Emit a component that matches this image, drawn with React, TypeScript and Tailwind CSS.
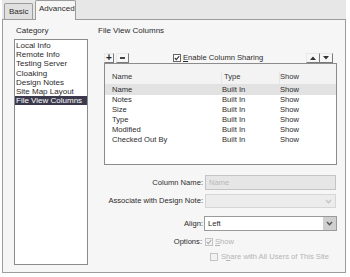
import React from "react";

function Check({ color = "#333" }: { color?: string }) {
  return (
    <svg width="6" height="6" viewBox="0 0 6 6">
      <polyline points="0.8,3 2.3,4.6 5.2,1.2" fill="none" stroke={color} strokeWidth="1.1" />
    </svg>
  );
}

function Chevron({ color }: { color: string }) {
  return (
    <svg width="7" height="5" viewBox="0 0 7 5">
      <polyline points="1,1 3.5,3.8 6,1" fill="none" stroke={color} strokeWidth="1.4" />
    </svg>
  );
}

const categories = [
  "Local Info",
  "Remote Info",
  "Testing Server",
  "Cloaking",
  "Design Notes",
  "Site Map Layout",
  "File View Columns",
];

const rows = ["Name", "Notes", "Size", "Type", "Modified", "Checked Out By"];

export default function App() {
  return (
    <div className="w-[350px] h-[277px] bg-white pl-[2px] pr-[4px] text-[7.6px] text-[#2c2c2c] font-['Liberation_Sans',Arial,sans-serif] overflow-hidden">
      {/* tab strip */}
      <div className="h-[19px] flex items-end bg-[#e7e7e7] relative z-10">
        <div className="ml-[2px] w-[29px] h-[16px] border border-b-0 border-[#9c9c9c] bg-[#e0e0e0] rounded-t-[2px] pl-[4px] pt-[3px] leading-[10px] text-[8px]">
          Basic
        </div>
        <div className="ml-[2px] w-[41px] h-[20px] -mb-px border border-b-0 border-[#9c9c9c] bg-[#f6f6f6] rounded-t-[2px] pl-[3px] pt-[3px] leading-[10px] text-[8px]">
          Advanced
        </div>
      </div>

      {/* panel */}
      <div className="h-[254px] border border-[#9c9c9c] bg-[#f6f6f6] flex">
        {/* left column */}
        <div className="ml-[11px] w-[74px] pt-[6px] flex flex-col">
          <div className="h-[10px] leading-[10px] pl-[2px] text-[8px]">Category</div>
          <div className="mt-[3px] h-[226px] border border-[#8c8c8c] bg-white pt-[1px] flex flex-col text-[8px]">
            {categories.map((c, i) => (
              <div
                key={c}
                className={
                  i === categories.length - 1
                    ? "leading-[9.2px] h-[9.2px] pl-[1px] bg-[#3a3a4c] text-white"
                    : "leading-[9.2px] h-[9.2px] pl-[1px]"
                }
              >
                {c}
              </div>
            ))}
          </div>
        </div>

        {/* right column */}
        <div className="ml-[10px] w-[239px] pt-[6px] flex flex-col">
          <div className="h-[10px] leading-[10px] text-[8px]">File View Columns</div>

          {/* toolbar row */}
          <div className="mt-[17px] ml-[6px] mr-[4px] h-[10px] flex items-center">
            <div className="w-[10px] h-[10px] border-r border-b border-[#7a7a7a] border-l border-t border-l-[#e8e8e8] border-t-[#e8e8e8] flex items-center justify-center font-bold text-[10px] leading-[10px] text-[#222]">
              +
            </div>
            <div className="ml-[2px] w-[13px] h-[10px] border-r border-b border-[#7a7a7a] border-l border-t border-l-[#e8e8e8] border-t-[#e8e8e8] flex items-center justify-center">
              <div className="w-[5px] h-[1.5px] bg-[#444]" />
            </div>
            <div className="ml-[44px] w-[8px] h-[8px] border border-[#666] bg-white flex items-center justify-center">
              <Check />
            </div>
            <div className="ml-[2px] leading-[10px]">
              <span className="underline">E</span>nable Column Sharing
            </div>
            <div className="ml-auto flex">
              <div className="w-[14px] h-[10px] border-r border-b border-[#7a7a7a] border-l border-t border-l-[#e8e8e8] border-t-[#e8e8e8] flex items-center justify-center">
                <svg width="6" height="4" viewBox="0 0 6 4">
                  <polygon points="0,4 3,0.5 6,4" fill="#333" />
                </svg>
              </div>
              <div className="w-[13px] h-[10px] border-r border-b border-[#7a7a7a] border-t border-t-[#e8e8e8] flex items-center justify-center">
                <svg width="6" height="4" viewBox="0 0 6 4">
                  <polygon points="0,0 6,0 3,3.5" fill="#333" />
                </svg>
              </div>
            </div>
          </div>

          {/* table */}
          <div className="ml-[6px] h-[102px] border border-[#8c8c8c] bg-white flex flex-col">
            <div className="h-[21px] pt-[8px] leading-[10px] bg-[#f3f3f3] border-b border-[#e2e2e2] grid grid-cols-[117px_58px_1fr] text-[#333]">
              <div className="pl-[7px] border-r border-[#e6e6e6]">Name</div>
              <div className="pl-[2px] border-r border-[#e6e6e6]">Type</div>
              <div className="pl-[0px]">Show</div>
            </div>
            {rows.map((r, i) => (
              <div
                key={r}
                className={
                  i === 0
                    ? "h-[10px] leading-[10px] grid grid-cols-[117px_58px_1fr] bg-[#e2e2e2]"
                    : "h-[10px] leading-[10px] grid grid-cols-[117px_58px_1fr]"
                }
              >
                <div className="pl-[7px]">{r}</div>
                <div>Built In</div>
                <div>Show</div>
              </div>
            ))}
          </div>

          {/* form */}
          <div className="mt-[10px] h-[15px] flex items-center">
            <div className="w-[105px] text-right leading-[10px]">Column Name:</div>
            <div className="ml-[2px] w-[131px] h-[15px] border border-[#c4c4c4] bg-[#e6e6e6] pl-[3px] leading-[13px] text-[#b9b9b9]">
              Name
            </div>
          </div>
          <div className="mt-[4px] h-[14px] flex items-center">
            <div className="w-[105px] text-right leading-[10px]">Associate with Design Note:</div>
            <div className="ml-[2px] w-[131px] h-[14px] border border-[#d6d6d6] bg-[#ececec] flex items-center justify-end pr-[3px]">
              <Chevron color="#c4c4c4" />
            </div>
          </div>
          <div className="mt-[8px] h-[15px] flex items-center">
            <div className="w-[105px] text-right leading-[10px]">Align:</div>
            <div className="ml-[1px] w-[133px] h-[15px] border border-[#9a9a9a] bg-white flex items-center">
              <div className="pl-[3px] leading-[10px] flex-1">Left</div>
              <div className="w-[13px] h-[13px] bg-[#cfcfcf] flex items-center justify-center">
                <Chevron color="#555" />
              </div>
            </div>
          </div>
          <div className="mt-[6px] h-[10px] flex items-center">
            <div className="w-[104px] text-right leading-[10px]">Options:</div>
            <div className="ml-[3px] w-[8px] h-[8px] border border-[#c4c4c4] bg-[#f2f2f2] flex items-center justify-center">
              <Check color="#b0b0b0" />
            </div>
            <div className="ml-[2px] leading-[10px] text-[#b4b4b4]">
              <span className="underline">S</span>how
            </div>
          </div>
          <div className="mt-[5px] h-[10px] flex items-center">
            <div className="ml-[112px] w-[8px] h-[8px] border border-[#c4c4c4] bg-[#f2f2f2]" />
            <div className="ml-[3px] leading-[10px] text-[#b4b4b4]">
              S<span className="underline">h</span>are with All Users of This Site
            </div>
          </div>
        </div>
      </div>
    </div>
  );
}
